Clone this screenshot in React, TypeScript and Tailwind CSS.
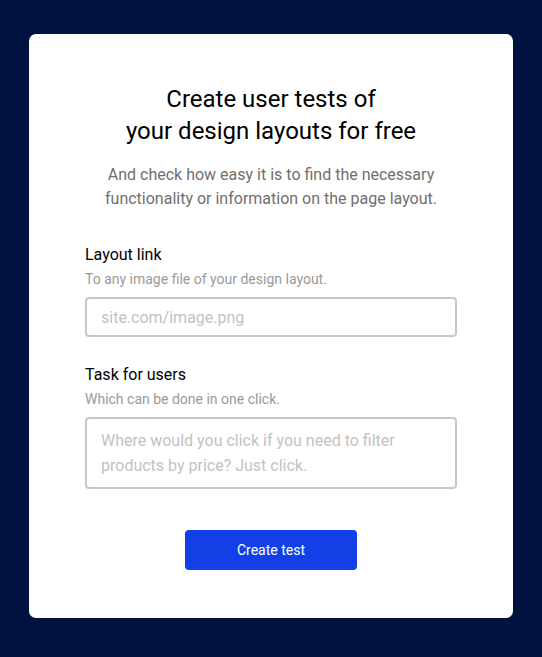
import React from "react";

export default function App() {
  return (
    <div
      className="min-h-screen w-full bg-[#011240] flex justify-center pt-[34px]"
      style={{ fontFamily: "Roboto, 'Noto Sans', sans-serif" }}
    >
      <div className="w-[484px] h-[584px] bg-white rounded-[7px] px-[56px] pt-[49px] pb-[48px] flex flex-col">
        <h1 className="text-center text-[24px] leading-[32px] text-black font-normal">
          Create user tests of
          <br />
          your design layouts for free
        </h1>
        <p className="mt-[16px] text-center text-[16px] leading-[24px] text-[#6f6f6f]">
          And check how easy it is to find the necessary
          <br />
          functionality or information on the page layout.
        </p>

        <label className="mt-[32px] text-[16px] leading-[24px] text-black">Layout link</label>
        <div className="mt-[2px] text-[14px] leading-[20px] text-[#9a9a9a]">
          To any image file of your design layout.
        </div>
        <input
          className="mt-[8px] h-[40px] w-full rounded-[4px] border-2 border-[#c8c8c8] px-[14px] text-[16px] text-black outline-none placeholder:text-[#c2c2c2]"
          placeholder="site.com/image.png"
        />

        <label className="mt-[26px] text-[16px] leading-[24px] text-black">Task for users</label>
        <div className="mt-[2px] text-[14px] leading-[20px] text-[#9a9a9a]">
          Which can be done in one click.
        </div>
        <textarea
          className="mt-[8px] h-[72px] w-full resize-none rounded-[4px] border-2 border-[#c8c8c8] px-[14px] pt-[9px] text-[16px] leading-[25px] text-black outline-none placeholder:text-[#c2c2c2]"
          placeholder="Where would you click if you need to filter products by price? Just click."
        />

        <div className="mt-[41px] flex justify-center">
          <button className="h-[40px] w-[172px] rounded-[4px] bg-[#1240e6] text-[14px] text-white">
            Create test
          </button>
        </div>
      </div>
    </div>
  );
}
